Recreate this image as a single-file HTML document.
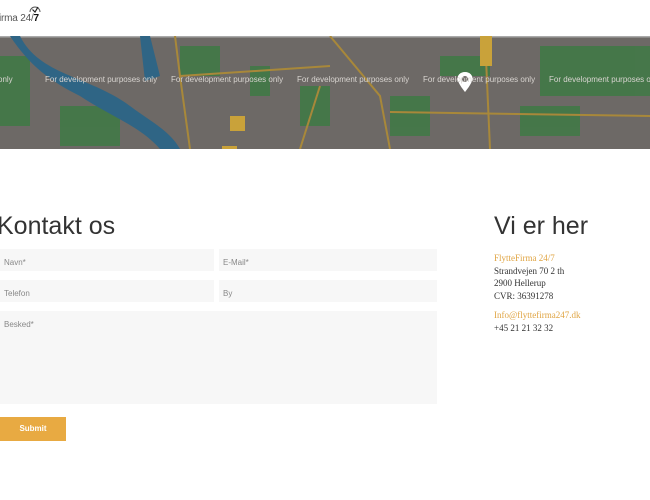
<!DOCTYPE html>
<html><head><meta charset="utf-8"><style>
*{margin:0;padding:0;box-sizing:border-box}
body{width:650px;height:500px;background:#fff;font-family:"Liberation Sans",sans-serif;position:relative;overflow:hidden}
.abs{position:absolute}
.f{position:absolute;background:#f7f7f7;font-size:8px;color:#888;padding:9px 0 0 4px}
.mt{position:absolute;top:75px;font-size:8px;color:#d8d4d0;white-space:nowrap}
.r{font-family:"Liberation Serif",serif;font-size:9px;color:#333;line-height:12.5px}
</style></head><body>
<div class="abs" style="left:-1px;top:13px;font-size:10px;color:#555;letter-spacing:-0.2px">irma 24/<b style="color:#111">7</b></div>
<svg class="abs" style="left:28px;top:4px" width="14" height="10" viewBox="0 0 14 10"><path d="M2 8A5 5 0 0 1 12 8" fill="none" stroke="#555" stroke-width="1"/><path d="M4.5 5.5L7 8L10 3" fill="none" stroke="#222" stroke-width="1.2"/></svg>
<svg class="abs" style="left:0;top:36px" width="650" height="113" viewBox="0 0 650 113">
<rect width="650" height="113" fill="#6d6966"/>
<rect x="0" y="0" width="650" height="1.5" fill="#aaa"/>
<g fill="#3f7a45" opacity="0.85">
<rect x="0" y="20" width="30" height="70"/><rect x="180" y="10" width="40" height="30"/><rect x="300" y="50" width="30" height="40"/><rect x="390" y="60" width="40" height="40"/><rect x="440" y="20" width="50" height="20"/><rect x="540" y="10" width="110" height="50"/><rect x="520" y="70" width="60" height="30"/><rect x="60" y="70" width="60" height="40"/><rect x="250" y="30" width="20" height="30"/>
</g>
<path d="M20 0C40 40 90 40 130 70C150 85 170 95 180 113L160 113C140 90 110 80 80 60C50 45 30 30 10 0Z" fill="#2f6585"/>
<path d="M140 0L150 0L160 40L145 45Z" fill="#2f6585"/>
<g stroke="#a8883a" stroke-width="2" fill="none">
<path d="M175 0L180 40L190 113"/><path d="M330 0L380 60L390 113"/><path d="M485 0L490 113"/><path d="M390 76L650 80"/><path d="M180 40L330 30"/><path d="M300 113L320 50"/>
</g>
<g fill="#c9a23a"><rect x="222" y="110" width="15" height="3"/><rect x="230" y="80" width="15" height="15"/><rect x="480" y="0" width="12" height="30"/></g>
<path d="M465 36c-5 0-7.5 3.5-7.5 6.5c0 4.5 7.5 13.5 7.5 13.5s7.5-9 7.5-13.5c0-3-2.5-6.5-7.5-6.5z" fill="#fff"/><circle cx="465" cy="43" r="3" fill="#6d6966"/>
</svg>
<div class="mt" style="left:-2px">only</div>
<div class="mt" style="left:45px">For development purposes only</div>
<div class="mt" style="left:171px">For development purposes only</div>
<div class="mt" style="left:297px">For development purposes only</div>
<div class="mt" style="left:423px">For development purposes only</div>
<div class="mt" style="left:549px">For development purposes only</div>
<div class="abs" style="left:-3px;top:212px;font-size:25px;color:#333">Kontakt os</div>
<div class="f" style="left:0;top:249px;width:214px;height:22px">Navn*</div>
<div class="f" style="left:219px;top:249px;width:218px;height:22px">E-Mail*</div>
<div class="f" style="left:0;top:280px;width:214px;height:22px">Telefon</div>
<div class="f" style="left:219px;top:280px;width:218px;height:22px">By</div>
<div class="f" style="left:0;top:311px;width:437px;height:93px;padding-top:9px">Besked*</div>
<div class="abs" style="left:0;top:417px;width:66px;height:24px;background:#e8aa42;color:#fff;font-size:8px;font-weight:bold;text-align:center;line-height:24px">Submit</div>
<div class="abs" style="left:494px;top:212px;font-size:25px;color:#333">Vi er her</div>
<div class="abs r" style="left:494px;top:252px"><span style="color:#e0a544">FlytteFirma 24/7</span><br>Strandvejen 70 2 th<br>2900 Hellerup<br>CVR: 36391278</div>
<div class="abs r" style="left:494px;top:309px"><span style="color:#e0a544">Info@flyttefirma247.dk</span><br>+45 21 21 32 32</div>
</body></html>
